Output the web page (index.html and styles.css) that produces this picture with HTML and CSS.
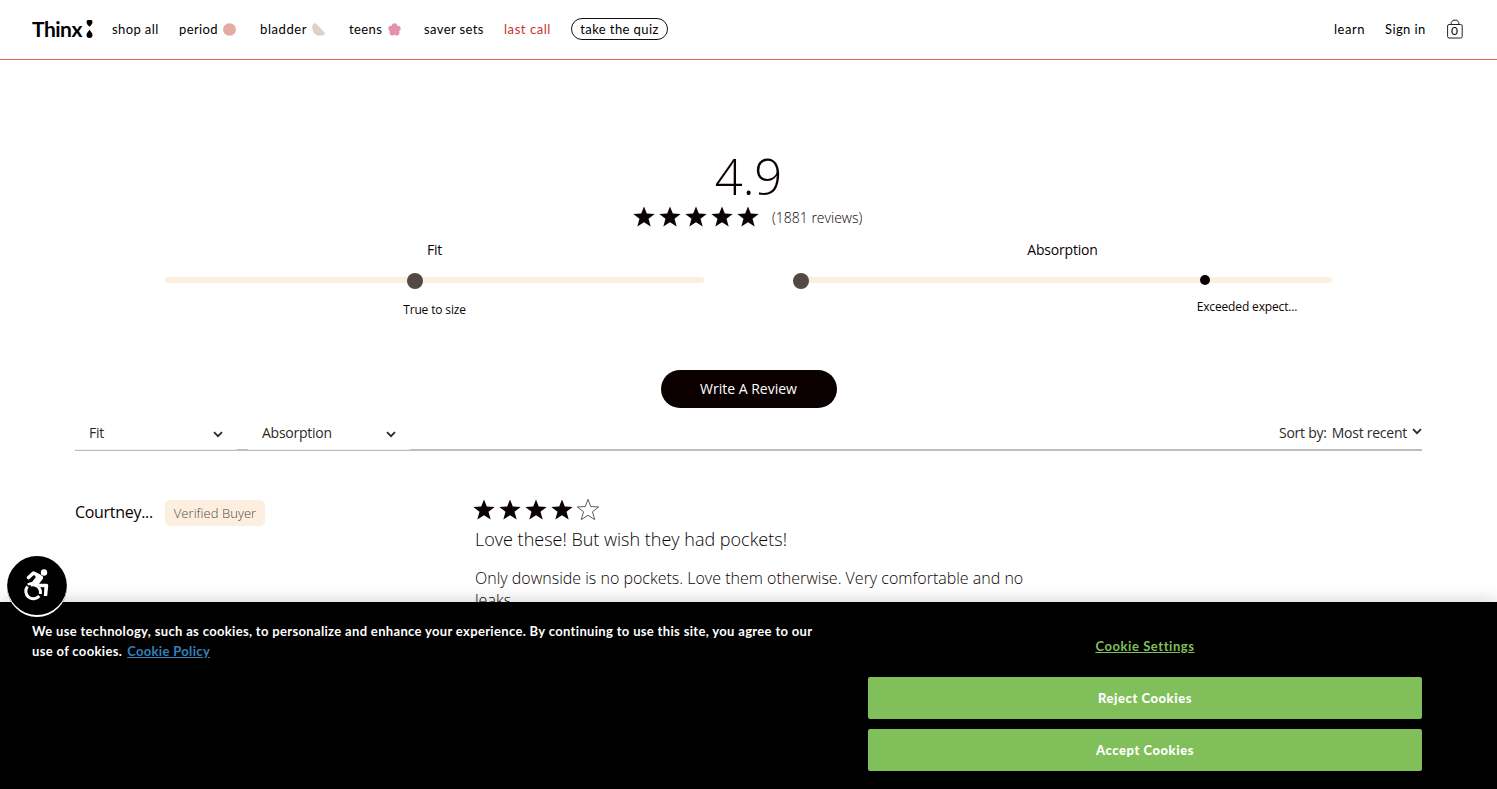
FILE: index.html
```html
<!DOCTYPE html>
<html lang="en">
<head>
<meta charset="utf-8">
<title>Thinx reviews</title>
<link rel="stylesheet" href="styles.css">
</head>
<body>
<svg width="0" height="0" class="defs"><defs>
<symbol id="star" viewBox="0 0 22 22"><path d="M11 .4l2.800 7.200 7.900.3-6.200 4.900 2.200 7.800L11 16.300l-6.700 4.300 2.200-7.800L.3 7.900l7.900-.3z"/></symbol>
</defs></svg>
<header class="header">
  <div class="logo"><span>Thinx</span>
    <svg width="7" height="18" viewBox="0 0 7 18"><path d="M1 .3C2 0 5 0 6 .3 7.400 3 5.200 5.500 3.500 6.800 1.800 5.500-.4 3 1 .3zM3.500 9.800C5 11.800 6.500 13.200 6.500 15a3 3 0 0 1-6 0c0-1.800 1.500-3.200 3-5.200z"/></svg>
  </div>
  <nav class="nav">
    <a class="shop">shop all</a>
    <a class="period">period</a>
    <svg class="ico-period" width="13" height="13" viewBox="0 0 13 13"><path fill="#e2aca3" d="M6.500 0l1.300.8 1.500-.2.9 1.200 1.500.5.3 1.500 1 1.200-.4 1.500.4 1.500-1 1.200-.3 1.500-1.500.5-.9 1.200-1.500-.2-1.300.8-1.300-.8-1.500.2-.9-1.200-1.500-.5-.3-1.500L0 8l.4-1.500L0 5l1-1.200.3-1.500 1.500-.5.9-1.200 1.500.2z"/></svg>
    <a class="bladder">bladder</a>
    <svg class="ico-bladder" width="13" height="13" viewBox="0 0 13 13"><path fill="#e0cfc5" d="M2 .4c1.500-.4 2.400.8 3.400 1.700l6.400 6.600c1.200 1 1.600 2 .4 2.900C8.500 13.800 3.300 13 1.200 8.700-.2 5.500-.2 1.500 2 .4z"/></svg>
    <a class="teens">teens</a>
    <svg class="ico-teens" width="13" height="13" viewBox="0 0 13 13" fill="#e491a9"><circle cx="6.500" cy="3" r="2.700"/><circle cx="9.900" cy="5.500" r="2.700"/><circle cx="8.700" cy="9.700" r="2.700"/><circle cx="4.300" cy="9.700" r="2.700"/><circle cx="3.100" cy="5.500" r="2.700"/><circle cx="6.500" cy="6.800" r="3"/></svg>
    <a class="saver">saver sets</a>
    <a class="last">last call</a>
    <a class="quiz">take the quiz</a>
  </nav>
  <div class="account">
    <a class="learn">learn</a><a class="signin">Sign in</a>
    <div class="bag"><svg width="16" height="20" viewBox="0 0 16 20" fill="none" stroke="#222"><rect x=".6" y="5.500" width="14.600" height="13.500" rx="1.500"/><path d="M4.200 5.300V3.500L6 1.200h4l1.800 2.300v1.800"/></svg><span>0</span></div>
  </div>
</header>
<main class="reviews">
  <div class="score">4.9</div>
  <div class="summary">
    <div class="stars"><svg><use href="#star"/></svg><svg><use href="#star"/></svg><svg><use href="#star"/></svg><svg><use href="#star"/></svg><svg><use href="#star"/></svg></div>
    <span class="count">(1881 reviews)</span>
  </div>
  <div class="scales">
    <section class="scale fit">
      <h3>Fit</h3>
      <div class="track"><i class="knob knob-fit"></i></div>
      <p>True to size</p>
    </section>
    <section class="scale absorption">
      <h3>Absorption</h3>
      <div class="track"><i class="knob knob-abs"></i><i class="dot"></i></div>
      <p>Exceeded expect...</p>
    </section>
  </div>
  <button class="write"><span>Write A Review</span></button>
  <div class="filters">
    <div class="filter"><span class="f-fit">Fit</span><svg width="10" height="7" viewBox="0 0 10 7"><path d="M1 1.200l4 4 4-4"/></svg></div>
    <div class="filter"><span class="f-abs">Absorption</span><svg width="10" height="7" viewBox="0 0 10 7"><path d="M1 1.200l4 4 4-4"/></svg></div>
    <div class="sort"><span class="by">Sort by:</span><span class="recent">Most recent</span><svg width="10" height="7" viewBox="0 0 10 7"><path d="M1 1.200l4 4 4-4"/></svg></div>
  </div>
  <article class="review">
    <div class="buyer"><span class="name">Courtney...</span><span class="badge">Verified Buyer</span></div>
    <div class="content">
      <div class="stars"><svg><use href="#star"/></svg><svg><use href="#star"/></svg><svg><use href="#star"/></svg><svg><use href="#star"/></svg><svg class="empty"><use href="#star"/></svg></div>
      <h2>Love these! But wish they had pockets!</h2>
      <p><span>Only downside is no pockets. Love them otherwise. Very comfortable and no</span><br>leaks.</p>
    </div>
  </article>
</main>
<aside class="cookies">
  <p class="notice"><span class="n1">We use technology, such as cookies, to personalize and enhance your experience. By continuing to use this site, you agree to our</span><br><span class="n2">use of cookies.</span><a class="policy">Cookie Policy</a></p>
  <div class="actions">
    <a class="settings">Cookie Settings</a>
    <button>Reject Cookies</button>
    <button>Accept Cookies</button>
  </div>
</aside>
<div class="access"><svg width="26" height="32" viewBox="0 0 26 32" fill="none" stroke="#fff">
  <circle cx="21" cy="3.500" r="3.200" fill="#fff" stroke="none"/>
  <path stroke-width="3.600" stroke-linejoin="round" stroke-linecap="round" d="M5.500 8.500l5-4.500 6 3"/>
  <path fill="#fff" stroke="none" d="M11.500 3l7.500 3.800c1.500 1 1.600 2.300.6 3.500l-3.600 4.500h7.500c1.200 0 1.800.8 1.700 1.900l-1 10.300h-3.400l.6-8.700h-3.800c-2.200-2-4.600-3-7.800-2.900-2 .1-3 .5-4.300 1.200L4 14.800c2-1.300 3.400-1.800 5-1.900l3.600-4.500z"/>
  <path stroke-width="3" d="M4.500 17.400a7.600 7.600 0 1 0 11.800 9.600M7.500 16a7.800 7.800 0 0 1 9.800 9"/>
</svg></div>
</body>
</html>
```
FILE: styles.css
```css
* { box-sizing: border-box; }
body { margin: 0; height: 789px; overflow: hidden; background: #fff; color: #0a0203; font-family: "Open Sans", "Noto Sans", sans-serif; position: relative; }
h2, h3, p { margin: 0; font-weight: 400; }
svg { display: block; flex: none; }
.defs { position: absolute; }
a, span { white-space: nowrap; }

.header { height: 60px; border-bottom: 1px solid #e9604f; display: flex; align-items: center; padding: 0 32px 1px; font: 13px/20px Lato, sans-serif; color: #000; }
.logo { width: 80px; display: flex; align-items: center; font-size: 21px; font-weight: 700; letter-spacing: -.5px; }
.logo span { width: 54px; }
.nav { display: flex; align-items: center; flex: 1; letter-spacing: .4px; }
.nav a { flex: none; }
.shop { width: 67px; }
.period { width: 44px; }
.bladder { width: 52px; letter-spacing: .6px; }
.teens { width: 39px; }
.ico-period { margin-right: 24px; }
.ico-bladder { margin-right: 24px; }
.ico-teens { margin-right: 23px; }
.saver { width: 80px; }
.last { width: 67px; color: #c9302c; letter-spacing: .55px; }
.quiz { width: 97px; height: 22px; border: 1px solid #111; border-radius: 11px; text-align: center; line-height: 21px; }
.account { display: flex; align-items: center; letter-spacing: .4px; }
.learn { width: 51px; letter-spacing: .5px; }
.signin { width: 62px; }
.bag { width: 18px; position: relative; height: 20px; }
.bag span { position: absolute; left: 4px; top: 2px; font-size: 12px; letter-spacing: 0; }

.reviews { padding: 86px 75px 0; }
.score { font-size: 49px; font-weight: 300; line-height: 60px; text-align: center; }
.summary { display: flex; align-items: center; height: 22px; margin-left: 558px; }
.stars { display: flex; gap: 4px; }
.stars svg { width: 22px; height: 22px; fill: #0a0203; }
.count { font-size: 14px; font-weight: 300; margin-left: 13px; }
.scales { display: flex; padding-left: 90px; margin-top: 11px; height: 131px; }
.scale { width: 539px; }
.absorption { margin-left: 89px; }
.scale h3 { font-size: 14px; line-height: 22px; text-align: center; letter-spacing: -.2px; }
.track { height: 6px; border-radius: 3px; background: #fcefdf; margin-top: 16px; position: relative; }
.knob { position: absolute; width: 16px; height: 16px; border-radius: 50%; background: #534845; top: -4px; }
.knob-fit { left: 242px; }
.knob-abs { left: 0; }
.dot { position: absolute; width: 10px; height: 10px; border-radius: 50%; background: #0a0203; top: -2px; left: 407px; }
.scale p { font-size: 12px; line-height: 16px; margin-top: 19px; text-align: center; letter-spacing: -.15px; }
.absorption p { margin-top: 16px; padding-left: 369px; }
.write { display: block; width: 176px; height: 38px; margin: 0 auto; padding: 0; border: 0; border-radius: 19px; background: #0a0000; color: #fff; font: 14px/38px "Open Sans", sans-serif; }
.filters { display: flex; height: 43px; border-bottom: 2px solid #bdbdbd; font-size: 14px; line-height: 22px; color: #2c2a29; letter-spacing: -.25px; }
.filter { width: 162px; height: 42px; margin-right: 11px; padding: 14px 14px 0; border-bottom: 1px solid #eee; display: flex; justify-content: space-between; }
.filter svg { margin-top: 9px; }
.filters path { fill: none; stroke: #2c2a29; stroke-width: 1.8; }
.sort { display: flex; margin-left: auto; padding-top: 14px; }
.by { margin-right: 5px; }
.sort svg { margin: 6px 0 0 5px; }
.review { display: flex; padding-top: 48px; }
.buyer { width: 400px; display: flex; align-items: flex-start; padding-top: 1px; }
.name { width: 90px; font-size: 16px; line-height: 24px; letter-spacing: -.3px; }
.badge { width: 100px; height: 26px; border-radius: 5px; background: #fcefdf; color: #534845; text-align: center; font-size: 13px; line-height: 27px; font-weight: 350; letter-spacing: .05px; }
.content .stars { margin-left: -2px; }
.empty { fill: none !important; stroke: #333; stroke-width: .8; }
.content h2 { font-size: 18px; line-height: 28px; margin-top: 4px; font-weight: 300; }
.content p { font-size: 16px; line-height: 22px; font-weight: 300; margin-top: 14px; }

.cookies { position: absolute; left: 0; right: 0; top: 602px; height: 187px; background: #000; box-shadow: 0 0 18px rgba(0,0,0,.2); color: #fff; display: flex; font: 700 13px/20px Lato, sans-serif; letter-spacing: .335px; }
.notice { width: 868px; padding: 19px 0 0 32px; font-weight: 700; }
.policy { color: #3480bd; text-decoration: underline; margin-left: 5px; }
.actions { width: 554px; display: flex; flex-direction: column; align-items: center; padding-top: 34px; }
.settings { color: #81bf5b; text-decoration: underline; height: 41px; letter-spacing: .57px; }
.actions button { width: 554px; height: 42px; margin-bottom: 10px; border: 0; border-radius: 2px; background: #81bf5b; color: #fff; font: 900 13px/40px Lato, sans-serif; padding: 0 0 1px; letter-spacing: .55px; }
.access { position: absolute; left: 7px; top: 556px; width: 60px; height: 61px; border-radius: 50%; background: #000; box-shadow: inset 0 -2px #fff; display: flex; padding: 13px 0 0 16px; }
```
